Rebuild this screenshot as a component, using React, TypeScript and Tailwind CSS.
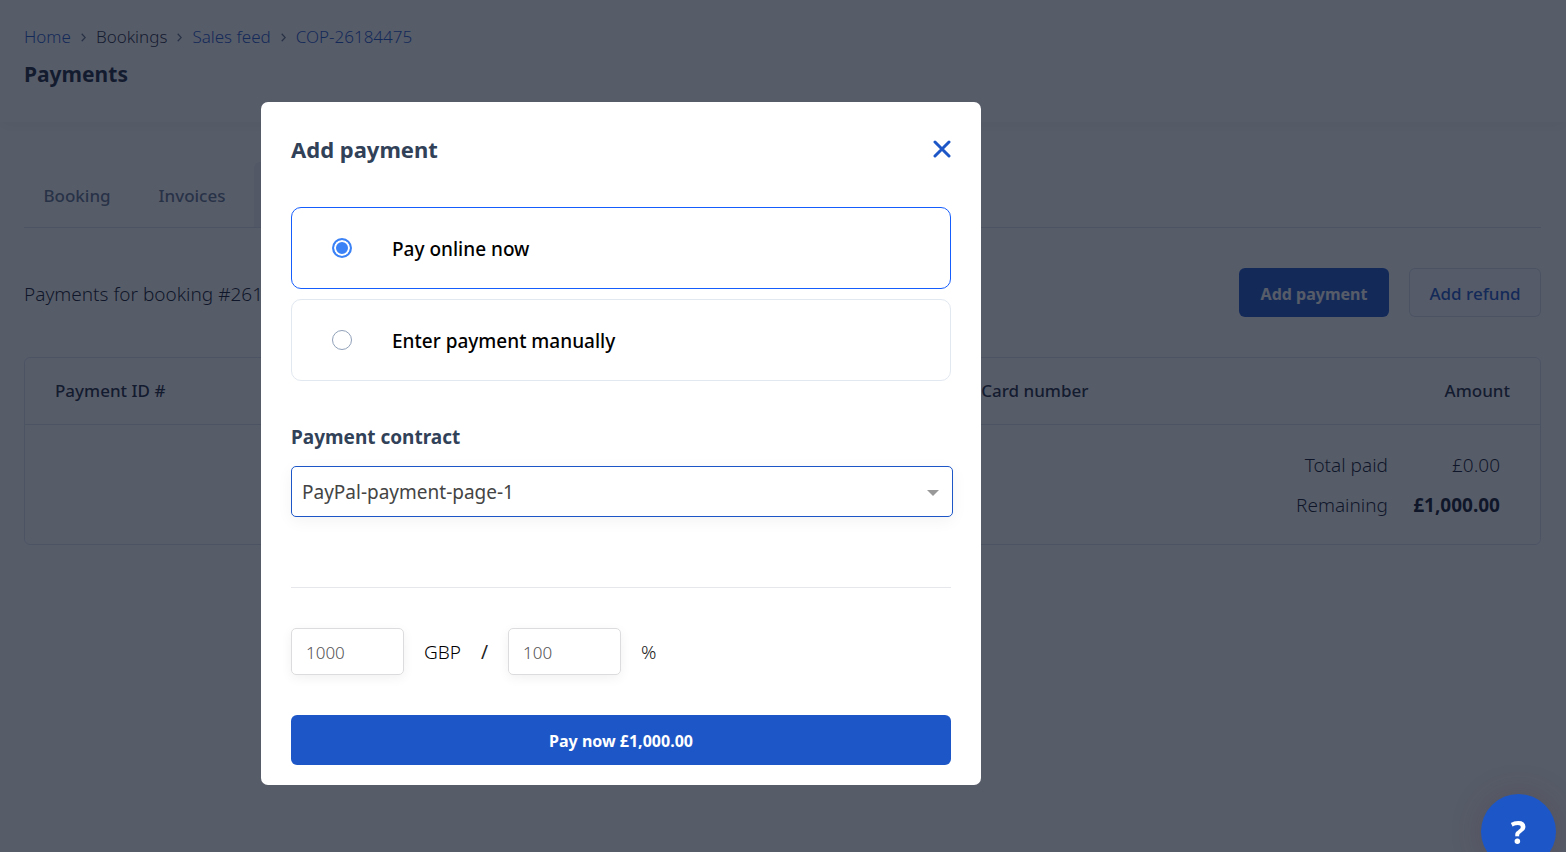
import { useState } from "react";

function Chevron() {
  return (
    <svg width="5" height="9" viewBox="0 0 5 9" fill="none" stroke="#64748b" strokeWidth="1.3" aria-hidden="true">
      <path d="M0.7 0.8L4.2 4.5L0.7 8.2" />
    </svg>
  );
}

function Breadcrumbs() {
  return (
    <nav aria-label="Breadcrumb" className="flex items-center gap-2.5 text-[17px] leading-6 font-light text-[#1d57c7]">
      <a href="#home">Home</a>
      <Chevron />
      <span className="text-slate-800">Bookings</span>
      <Chevron />
      <a href="#sales-feed">Sales feed</a>
      <Chevron />
      <a href="#booking">COP-26184475</a>
    </nav>
  );
}

function PaymentsTable() {
  return (
    <div className="mt-10 rounded-md border border-slate-300/70 pb-[19px]">
      <table className="w-full table-fixed border-collapse">
        <thead>
          <tr className="h-[66px] border-b border-slate-300/70 text-[17px] text-slate-800">
            <th className="w-[61%] pl-[30px] text-left font-medium">Payment ID #</th>
            <th className="pl-[32px] text-left font-medium">Card number</th>
            <th className="w-[152px] pr-[30px] text-right font-medium">Amount</th>
          </tr>
        </thead>
        <tbody className="text-[19px] leading-[40px] text-slate-900">
          <tr>
            <td colSpan={2} className="pt-5 text-right font-light">Total paid</td>
            <td className="pt-5 pr-10 text-right font-light">£0.00</td>
          </tr>
          <tr>
            <td colSpan={2} className="text-right font-light">Remaining</td>
            <td className="pr-10 text-right font-bold">£1,000.00</td>
          </tr>
        </tbody>
      </table>
    </div>
  );
}

function PaymentsPage() {
  return (
    <div className="min-h-screen bg-white">
      <header className="h-[122px] px-6 pt-[25px] shadow-[0_4px_14px_rgba(0,0,0,0.05)]">
        <Breadcrumbs />
        <h1 className="mt-3 text-[21px] leading-[26px] font-bold text-slate-800">Payments</h1>
      </header>
      <main className="pt-10 pr-[25px] pl-6">
        <nav aria-label="Booking sections" className="flex gap-2.5 border-b border-slate-300/70 text-[17px] font-medium text-slate-500">
          <a href="#details" className="flex h-[65px] w-[106px] items-center justify-center pt-0.5">Booking</a>
          <a href="#invoices" className="flex h-[65px] w-[104px] items-center justify-center pt-0.5">Invoices</a>
          <a href="#payments" aria-label="Payments" className="h-[65px] w-[120px] rounded-t-md bg-slate-200/60" />
        </nav>
        <div className="mt-10 flex items-center justify-between">
          <h2 className="pt-1 text-[19px] font-light text-slate-900">Payments for booking #26184475</h2>
          <div className="flex gap-5">
            <button type="button" className="h-[49px] w-[150px] rounded-md bg-[#1d57c7] pt-0.5 text-[16px] font-bold text-white">
              Add payment
            </button>
            <button type="button" className="h-[49px] w-[132px] rounded-md border border-slate-300/70 bg-slate-50 pt-0.5 text-[17px] font-medium text-[#1d57c7]">
              Add refund
            </button>
          </div>
        </div>
        <PaymentsTable />
      </main>
    </div>
  );
}

type OptionProps = { label: string; checked: boolean; onSelect: () => void };

function PaymentOption({ label, checked, onSelect }: OptionProps) {
  return (
    <label
      className={
        checked
          ? "flex h-[82px] cursor-pointer items-center gap-10 rounded-[10px] border border-blue-600 pl-10"
          : "flex h-[82px] cursor-pointer items-center gap-10 rounded-[10px] border border-slate-200 pl-10"
      }
    >
      <input
        type="radio"
        name="method"
        checked={checked}
        onChange={onSelect}
        className="size-5 appearance-none rounded-full border border-slate-400 checked:border-2 checked:border-[#3b82f6] checked:bg-[#3b82f6] checked:shadow-[inset_0_0_0_2px_white]"
      />
      <span className="pt-0.5 text-[19px] font-medium text-black">{label}</span>
    </label>
  );
}

function AddPaymentDialog() {
  const [method, setMethod] = useState("online");
  const amountBox =
    "h-[47px] w-[113px] rounded-[5px] border border-[#dcdcde] px-3.5 pt-0.5 text-[17px] font-light text-[#555] shadow-[0_3px_12px_rgba(0,0,0,0.06)] outline-none";

  return (
    <section role="dialog" aria-modal="true" aria-labelledby="dialog-title" className="w-[720px] max-w-full rounded-[7px] bg-white px-[30px] pt-[31px] pb-5">
      <div className="flex items-center justify-between">
        <h2 id="dialog-title" className="text-[22px] leading-8 font-bold text-slate-700">Add payment</h2>
        <button type="button" aria-label="Close">
          <svg width="18" height="18" viewBox="0 0 18 18" stroke="#1d57c7" strokeWidth="3" strokeLinecap="round" aria-hidden="true">
            <path d="M2 2L16 16M16 2L2 16" />
          </svg>
        </button>
      </div>

      <fieldset className="mt-[42px] flex flex-col gap-2.5" aria-label="Payment method">
        <PaymentOption label="Pay online now" checked={method === "online"} onSelect={() => setMethod("online")} />
        <PaymentOption label="Enter payment manually" checked={method === "manual"} onSelect={() => setMethod("manual")} />
      </fieldset>

      <label htmlFor="contract" className="mt-[42px] block text-[19px] leading-7 font-bold text-slate-700">
        Payment contract
      </label>
      <div className="relative mt-[15px] -mr-0.5">
        <select
          id="contract"
          className="h-[51px] w-full appearance-none rounded-[5px] border border-[#1d57c7] bg-white px-2.5 pt-0.5 text-[19px] text-[#444] shadow-[0_4px_16px_rgba(0,0,0,0.05)] outline-none"
        >
          <option>PayPal-payment-page-1</option>
        </select>
        <svg className="pointer-events-none absolute top-6 right-3.5" width="12" height="6" viewBox="0 0 12 6" fill="#999" aria-hidden="true">
          <path d="M0 0H12L6 6Z" />
        </svg>
      </div>

      <hr className="mt-[70px] border-gray-200" />

      <div className="mt-10 flex items-center gap-5 text-[19px] text-[#222]">
        <input id="amount" defaultValue="1000" className={amountBox} />
        <label htmlFor="amount" className="pt-0.5 font-light text-black">GBP</label>
        <span className="pt-0.5">/</span>
        <input id="percentage" defaultValue="100" className={amountBox} />
        <label htmlFor="percentage" className="pt-0.5 font-light">%</label>
      </div>

      <button type="button" className="mt-10 h-[50px] w-full rounded-md bg-[#1d57c7] pt-0.5 text-[16px] font-bold text-white">
        Pay now £1,000.00
      </button>
    </section>
  );
}

export default function App() {
  return (
    <div className="relative min-h-screen overflow-hidden font-['Noto_Sans',sans-serif]">
      <PaymentsPage />
      <div className="absolute inset-0 flex items-start bg-[rgba(15,23,42,0.7)] pt-[102px] pl-[261px]">
        <AddPaymentDialog />
      </div>
      <button
        type="button"
        aria-label="Help"
        className="fixed right-2.5 -bottom-[17px] size-[75px] rounded-full bg-[#1d57c7] text-[32px] leading-none font-bold text-white shadow-[0_0_30px_rgba(80,50,50,0.25)]"
      >
        ?
      </button>
    </div>
  );
}
